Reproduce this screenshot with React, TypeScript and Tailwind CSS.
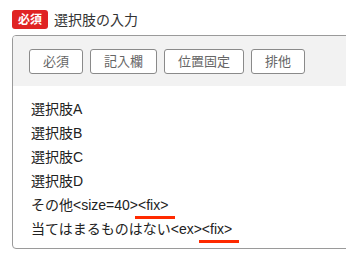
const tools = ['必須', '記入欄', '位置固定', '排他'];

function Marked({ children }: { children: string }) {
  return (
    <span className="relative">
      {children}
      <span className="absolute left-[-3px] right-[-7px] top-[19px] h-[3px] bg-[#ff2a00]" />
    </span>
  );
}

export default function App() {
  return (
    <div
      className="w-[346px] h-[260px] overflow-hidden bg-white text-[#222]"
      style={{ fontFamily: '"Liberation Sans", "Noto Sans CJK JP", sans-serif' }}
    >
      <div className="flex items-center gap-[6px] pl-[12px] pt-[10px] h-[29px]">
        <span className="flex items-center justify-center h-[19px] w-[36px] rounded-[3px] bg-[#e02323] text-white text-[12px] font-bold leading-none">
          必須
        </span>
        <span className="text-[14px] text-[#333] leading-none">選択肢の入力</span>
      </div>

      <div className="mt-[6px] ml-[12px] w-[360px] h-[214px] rounded-[4px] border border-[#9a9a9a] overflow-hidden">
        <div className="flex items-center gap-[7px] h-[50px] pl-[16px] bg-[#f2f2f2]">
          {tools.map((t) => (
            <button
              key={t}
              className="h-[25px] px-[13px] rounded-[3px] border border-[#8a8a8a] bg-white text-[13px] text-[#666] leading-none"
            >
              {t}
            </button>
          ))}
        </div>
        <div className="pl-[18px] pt-[11px] text-[14px] leading-[24px]">
          <div>選択肢A</div>
          <div>選択肢B</div>
          <div>選択肢C</div>
          <div>選択肢D</div>
          <div>
            その他&lt;size=40&gt;<Marked>&lt;fix&gt;</Marked>
          </div>
          <div>
            当てはまるものはない&lt;ex&gt;<Marked>&lt;fix&gt;</Marked>
          </div>
        </div>
      </div>
    </div>
  );
}
